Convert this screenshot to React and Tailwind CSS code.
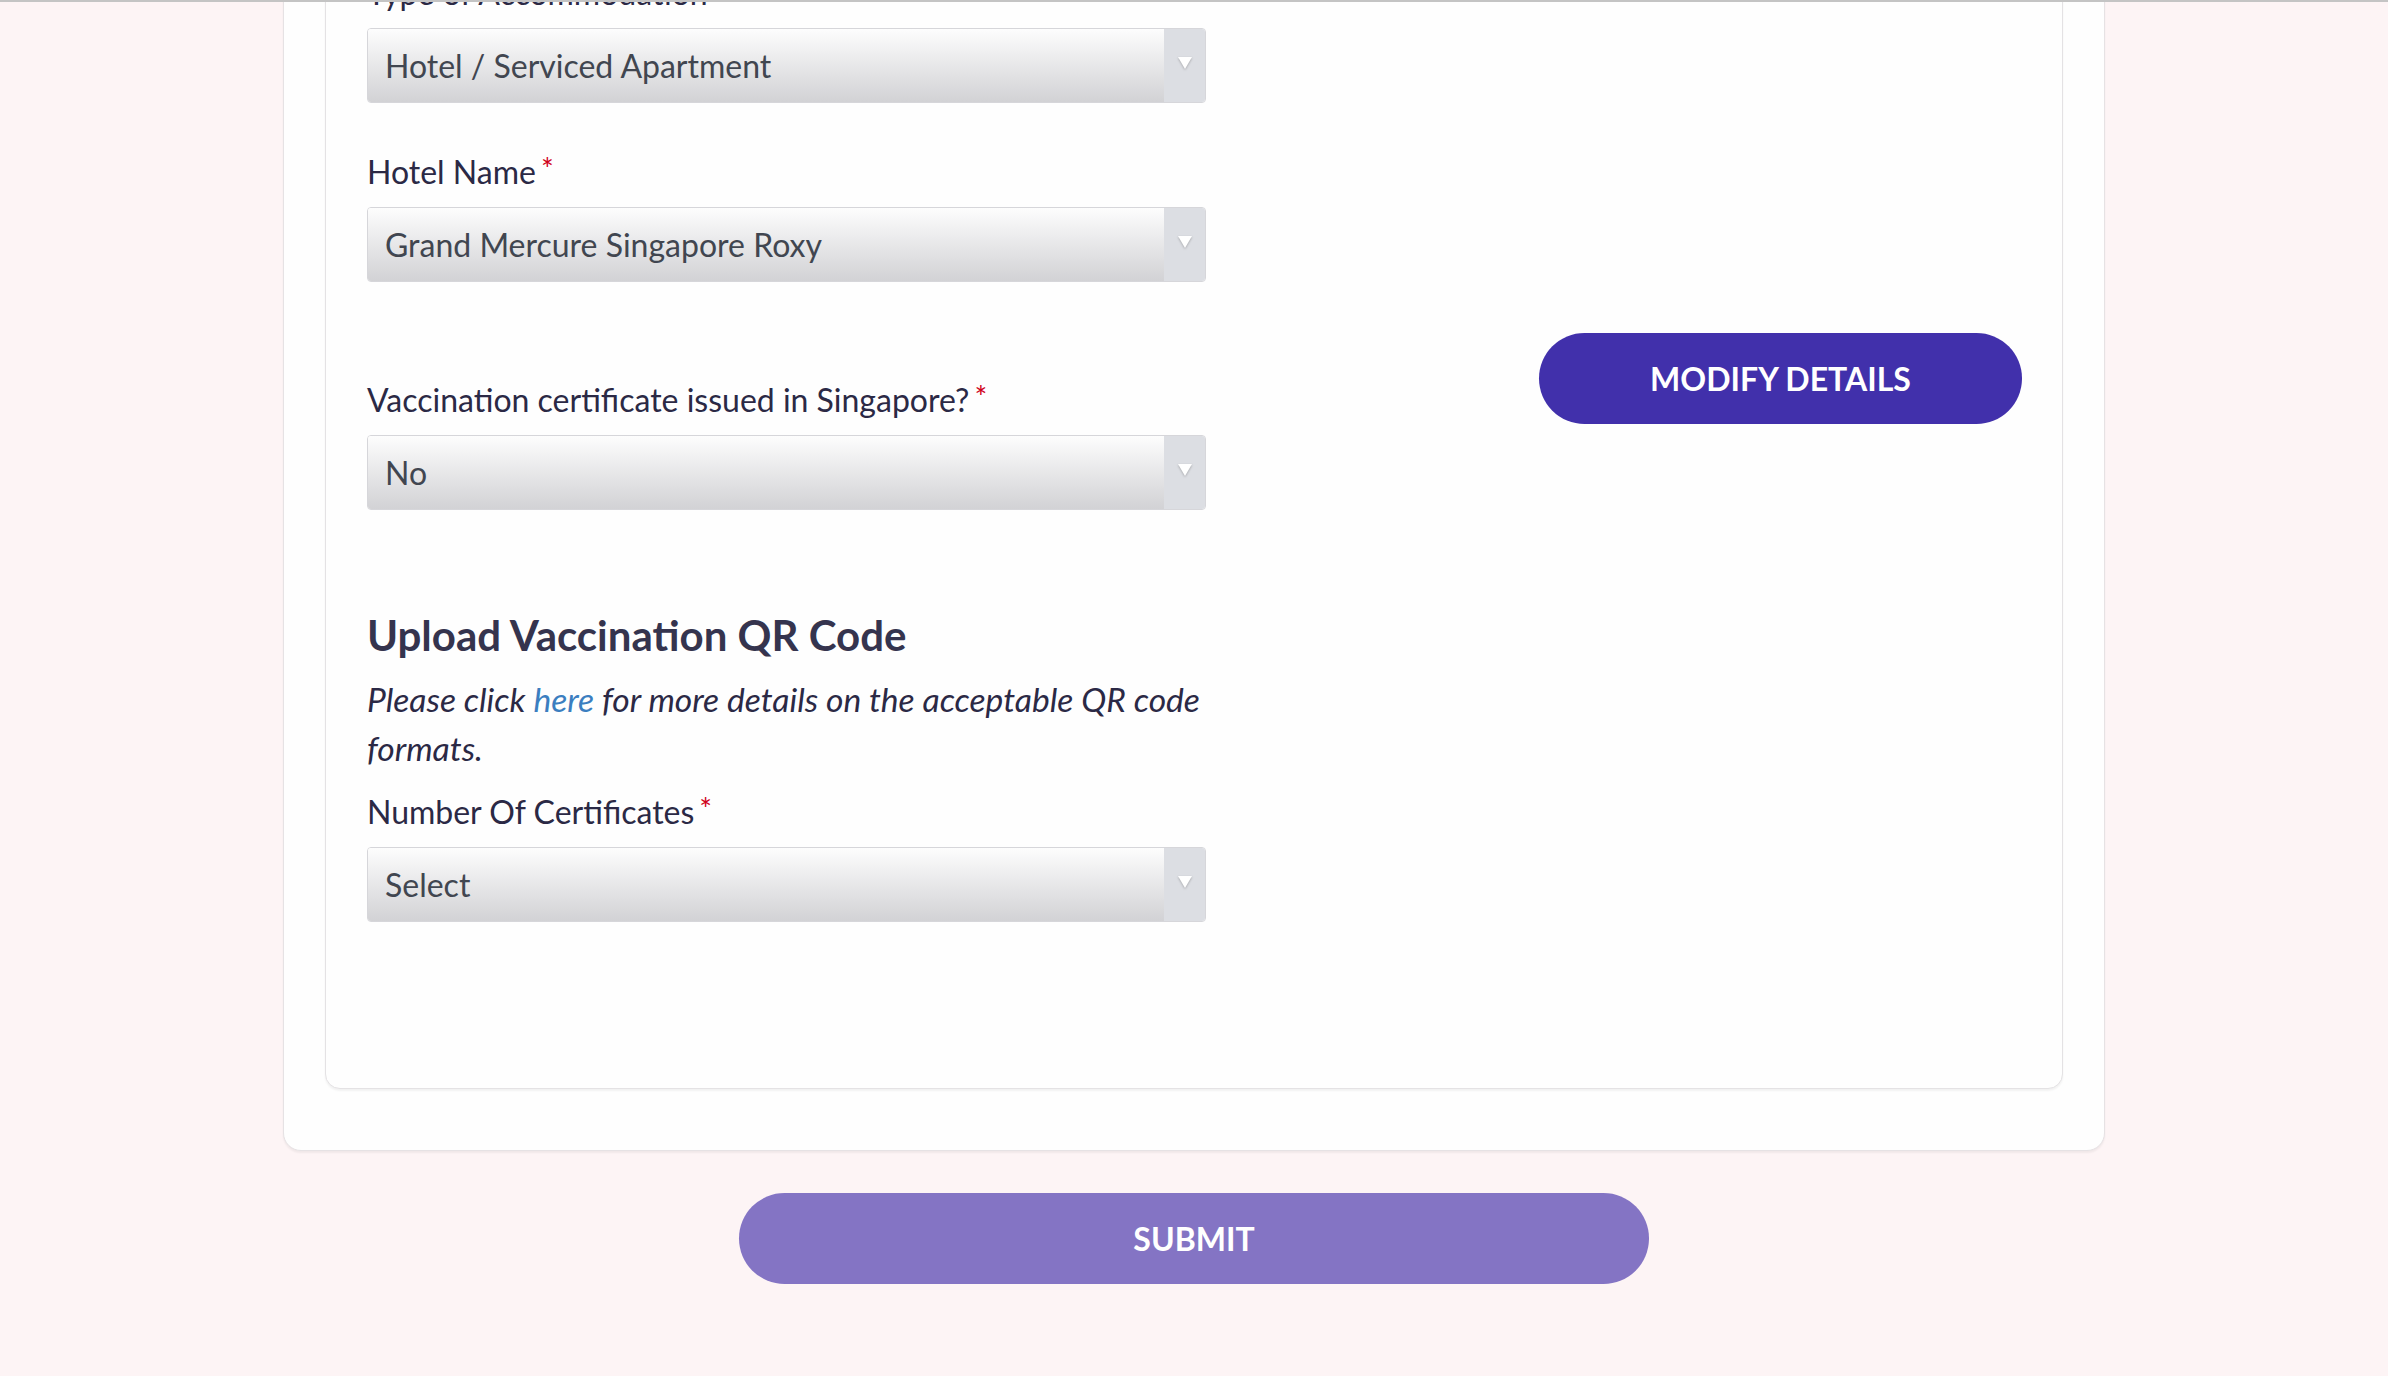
const Field = ({ label, value, required, className }) => (
  <div className={className}>
    <label className="block text-[32px] leading-[36px] text-[#2b2945]">
      {label}
      {required && <span className="relative -top-[4px] text-[#d0021b] text-[30px] leading-none ml-[5px]">*</span>}
    </label>
    <div className="mt-[17px] flex h-[75px] w-[839px] rounded-[4px] border border-[#d6d6da] overflow-hidden">
      <div className="flex-1 flex items-center pl-[17px] bg-gradient-to-b from-[#fdfdfd] to-[#d2d2d5] text-[32px] text-[#414650]">
        {value}
      </div>
      <div className="w-[41px] bg-[#dcdee3] flex justify-center pt-[28px]">
        <svg width="14" height="12" viewBox="0 0 14 12" className="drop-shadow-[0_1px_1px_rgba(0,0,0,0.25)]">
          <polygon points="0,0 14,0 7,12" fill="#ffffff" />
        </svg>
      </div>
    </div>
  </div>
)

const App = () => {
  return (
    <div
      className="h-[1376px] overflow-hidden bg-[#fdf4f5] border-t-2 border-[#c4c4c4]"
      style={{ fontFamily: 'Lato, "Open Sans", sans-serif' }}
    >
      <div className="-mt-[102px] mx-auto w-[1822px] rounded-[18px] border border-[#e6e2e4] bg-[#fefefe] pt-[41px] pb-[61px] px-[41px] shadow-[0_2px_2px_rgba(0,0,0,0.05)]">
        <div className="rounded-[15px] border border-[#e4e2e4] bg-[#fefefe] pt-[32px] pb-[166px] pl-[41px] pr-[40px] flex shadow-[0_2px_2px_rgba(0,0,0,0.05)]">
          {/* left column */}
          <div className="w-[839px]">
            <Field label="Type of Accommodation" value="Hotel / Serviced Apartment" />
            <Field className="mt-[51px]" label="Hotel Name" value="Grand Mercure Singapore Roxy" required />
            <Field className="mt-[100px]" label="Vaccination certificate issued in Singapore?" value="No" required />

            <h2 className="mt-[100px] text-[42px] leading-[50px] font-bold text-[#35344e]">
              Upload Vaccination QR Code
            </h2>
            <p className="mt-[15px] text-[33.6px] leading-[49px] italic text-[#2b2945]">
              Please click <a className="text-[#3b7ec0]">here</a> for more details on the acceptable QR code formats.
            </p>
            <Field className="mt-[21px]" label="Number Of Certificates" value="Select" required />
          </div>

          {/* right column */}
          <div className="flex-1 flex justify-end items-start pt-[358px]">
            <button className="w-[483px] h-[91px] rounded-full bg-[#4130ab] text-white text-[32px] font-bold">
              MODIFY DETAILS
            </button>
          </div>
        </div>
      </div>

      <div className="flex justify-center mt-[42px]">
        <button className="w-[910px] h-[91px] rounded-full bg-[#8474c4] text-white text-[32px] font-bold">
          SUBMIT
        </button>
      </div>
    </div>
  )
}

export default App
